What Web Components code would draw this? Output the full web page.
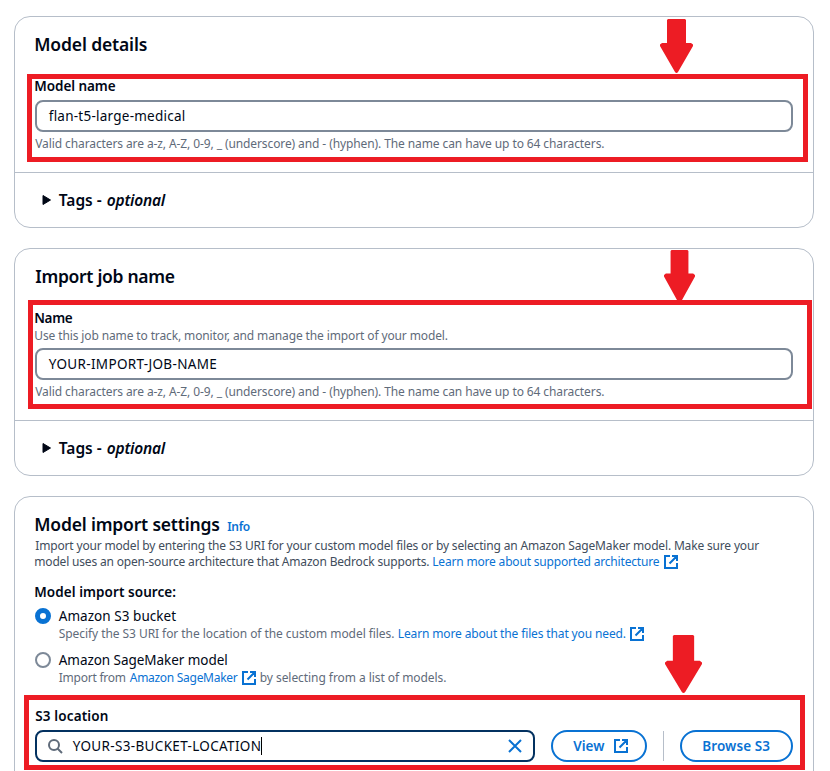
<!DOCTYPE html>
<html lang="en">
<head>
<meta charset="utf-8">
<title>Import model</title>
<style>
html,body{margin:0;background:#fff}
body{width:830px;height:771px;overflow:hidden;position:relative;color:#000716;font:14px/20px "Noto Sans","Open Sans",sans-serif}
</style>
</head>
<body>
<import-page></import-page>
<script>
const define = (name, html, setup) => customElements.define(name, class extends HTMLElement {
  connectedCallback() {
    if (this.shadowRoot) return;
    const t = document.createElement('template');
    t.innerHTML = html;
    this.attachShadow({mode: 'open'}).append(t.content.cloneNode(true));
    if (setup) setup(this, this.shadowRoot);
  }
});

/* One line of text tracked so that its ink spans exactly `w` pixels. */
const ctx = document.createElement('canvas').getContext('2d');
const kinds = {
  h: [17.5, 650, '#000716', 22], b: [13.5, 650, '#000716', 20], t: [13.5, 400, '#000716', 20],
  s: [12, 400, '#5f6b7a', 16], d: [12, 400, '#414d5c', 16], l: [12, 400, '#0972d3', 16],
  i: [12, 600, '#0972d3', 16], g: [15.5, 650, '#000716', 20], a: [13.5, 650, '#0972d3', 20]
};
define('fit-text', `<style>
:host{display:block;flex:none;white-space:pre}
span{display:block;width:max-content}
</style><span></span>`, (el, root) => {
  const [size, weight, color, lh] = kinds[el.getAttribute('k')];
  const w = +el.getAttribute('w'), text = el.getAttribute('text');
  const style = el.hasAttribute('italic') ? 'italic' : 'normal';
  const span = root.querySelector('span');
  ctx.font = `${style} ${weight} ${size}px "Noto Sans","Open Sans",sans-serif`;
  const m = ctx.measureText(text);
  const ink = m.actualBoundingBoxRight + m.actualBoundingBoxLeft;
  span.textContent = text;
  span.style.cssText = `font:${ctx.font};line-height:${lh}px;color:${color};letter-spacing:${((w - ink) / (text.length - 1)).toFixed(3)}px;margin-left:${(m.actualBoundingBoxLeft + .25).toFixed(2)}px`;
  el.style.width = w + 'px';
  el.style.height = lh + 'px';
});

define('external-icon', `<style>:host{display:block;flex:none;width:16px;height:16px}svg{display:block}</style>
<svg width="16" height="16" viewBox="0 0 16 16" fill="none" stroke="#0972d3" stroke-width="2"><path d="M7 2H2v12h12V9M9 2h5v5M14 2 6.5 9.5"/></svg>`);

define('ui-card', `<style>
:host{display:block;box-sizing:border-box;width:800px;border:1px solid #b6bec9;border-radius:16px;background:#fff}
.body{padding:17px 20px 20px}
</style><div class="body"><slot></slot></div><slot name="footer"></slot>`);

define('tags-footer', `<style>
:host{display:flex;align-items:center;height:54px;border-top:1px solid #b6bec9;padding-left:26.5px}
svg{display:block;margin-right:8px}
.o{margin-left:5px}
</style><svg width="9" height="10" viewBox="0 0 9 10"><path d="M1 .5v9L8.500 5z" fill="#000716" stroke="#000716" stroke-linejoin="round"/></svg>
<fit-text k="g" w="43" text="Tags -"></fit-text><fit-text class="o" k="g" italic w="59" text="optional"></fit-text>`);

define('text-field', `<style>
:host{display:flex;align-items:center;box-sizing:border-box;height:32px;border:2px solid #7d8998;border-radius:8px;padding:0 11.5px;margin:4px 0;background:#fff}
:host([focused]){border-color:#033160;width:500px;margin:0;padding:0 10px}
</style><slot></slot>`);

define('pill-button', `<style>
:host{display:flex;align-items:center;justify-content:center;box-sizing:border-box;height:32px;border:2px solid #0972d3;border-radius:16px;background:#fff}
</style><slot></slot>`);

define('radio-option', `<style>
:host{display:flex;gap:7.5px}
i{box-sizing:border-box;width:16px;height:16px;margin-top:2px;border:2px solid #7d8998;border-radius:50%}
:host([checked]) i{border:5px solid #0972d3}
</style><i></i><div><slot></slot></div>`);

define('red-frame', `<style>:host{display:block;position:absolute;box-sizing:border-box;border:5px solid #ed1c24}</style>`);
define('red-arrow', `<style>:host{display:block;position:absolute}svg{display:block;width:100%;height:100%}</style>
<svg viewBox="0 0 33 54" preserveAspectRatio="none"><path d="M8 0h17L26 1v23h5l2 1.500v1.500L18 53q-1.500 2-3 0L0 27v-1.500L2 24h5V1z" fill="#ed1c24"/></svg>`);

define('import-page', `<style>
:host{display:block}
main{display:flex;flex-direction:column;gap:20px;padding:16px 0 0 14px}
.sp{height:21px}.row{display:flex}
.s3{display:flex;align-items:center;margin-top:4px}
.bar{width:1px;height:30px;background:#b6bec9;margin:0 16px}
.caret{width:1px;height:18px;background:#000;margin-left:1px}
svg{display:block}
</style>
<main>
<ui-card>
  <fit-text k="h" w="111.5" text="Model details" style="margin-top:-1px"></fit-text><div class="sp"></div>
  <fit-text k="b" w="80.5" text="Model name"></fit-text>
  <text-field><fit-text k="t" w="136" text="flan-t5-large-medical"></fit-text></text-field>
  <fit-text k="s" w="569" text="Valid characters are a-z, A-Z, 0-9, _ (underscore) and - (hyphen). The name can have up to 64 characters."></fit-text>
  <tags-footer slot="footer"></tags-footer>
</ui-card>
<ui-card>
  <fit-text k="h" w="139.500" text="Import job name" style="margin-top:-1px"></fit-text><div class="sp"></div>
  <fit-text k="b" w="37.500" text="Name"></fit-text>
  <fit-text k="s" w="412.500" text="Use this job name to track, monitor, and manage the import of your model."></fit-text>
  <text-field><fit-text k="t" w="167.500" text="YOUR-IMPORT-JOB-NAME"></fit-text></text-field>
  <fit-text k="s" w="569" text="Valid characters are a-z, A-Z, 0-9, _ (underscore) and - (hyphen). The name can have up to 64 characters."></fit-text>
  <tags-footer slot="footer"></tags-footer>
</ui-card>
<ui-card style="height:300px">
  <div class="row" style="height:25px;margin-top:-1px"><fit-text k="h" w="184" text="Model import settings"></fit-text><fit-text k="i" w="22.500" text="Info" style="margin:6px 0 0 8px"></fit-text></div>
  <fit-text k="d" w="724" text="Import your model by entering the S3 URI for your custom model files or by selecting an Amazon SageMaker model. Make sure your"></fit-text>
  <div class="row"><fit-text k="d" w="394" text="model uses an open-source architecture that Amazon Bedrock supports."></fit-text><fit-text k="l" w="226.500" text="Learn more about supported architecture" style="margin-left:4px"></fit-text><external-icon style="margin-left:3.500px"></external-icon></div>
  <div style="height:12px"></div>
  <fit-text k="b" w="140" text="Model import source:"></fit-text>
  <radio-option checked style="margin-top:4px"><fit-text k="t" w="117.500" text="Amazon S3 bucket"></fit-text>
    <div class="row"><fit-text k="s" w="335.500" text="Specify the S3 URI for the location of the custom model files."></fit-text><fit-text k="l" w="227" text="Learn more about the files that you need." style="margin-left:4.500px"></fit-text><external-icon style="margin-left:3.500px"></external-icon></div></radio-option>
  <radio-option style="margin-top:8px"><fit-text k="t" w="168.500" text="Amazon SageMaker model"></fit-text>
    <div class="row"><fit-text k="s" w="67" text="Import from"></fit-text><fit-text k="l" w="108" text="Amazon SageMaker" style="margin-left:4px"></fit-text><external-icon style="margin-left:3.500px"></external-icon><fit-text k="s" w="185.500" text="by selecting from a list of models." style="margin-left:3.500px"></fit-text></div></radio-option>
  <fit-text k="b" w="72.500" text="S3 location" style="margin-top:20px"></fit-text>
  <div class="s3">
    <text-field focused>
      <svg width="16" height="16" viewBox="0 0 16 16" fill="none" stroke="#5f6b7a" stroke-width="2"><circle cx="7" cy="7" r="5"/><path d="m10.500 10.500 4.500 4.500"/></svg>
      <fit-text k="t" w="187" text="YOUR-S3-BUCKET-LOCATION" style="margin-left:9.500px"></fit-text><div class="caret" style="margin-left:1.500px"></div>
      <svg style="margin-left:auto" width="16" height="16" viewBox="0 0 16 16" stroke="#0972d3" stroke-width="2"><path d="m2 2 12 12M14 2 2 14"/></svg>
    </text-field>
    <pill-button style="width:96px;margin-left:16px"><fit-text k="a" w="32" text="View" style="margin-left:4px"></fit-text><external-icon style="margin-left:8px"></external-icon></pill-button>
    <div class="bar"></div>
    <pill-button style="width:113px"><fit-text k="a" w="67" text="Browse S3"></fit-text></pill-button>
  </div>
</ui-card>
</main>
<red-frame style="left:27px;top:74px;width:781px;height:88px"></red-frame>
<red-frame style="left:28px;top:300px;width:784px;height:109px"></red-frame>
<red-frame style="left:24px;top:695px;width:781px;height:75px"></red-frame>
<red-arrow style="left:660px;top:19px;width:33px;height:54px"></red-arrow>
<red-arrow style="left:664px;top:250px;width:31px;height:53px"></red-arrow>
<red-arrow style="left:665px;top:635px;width:37px;height:58px"></red-arrow>`);
</script>
</body>
</html>
